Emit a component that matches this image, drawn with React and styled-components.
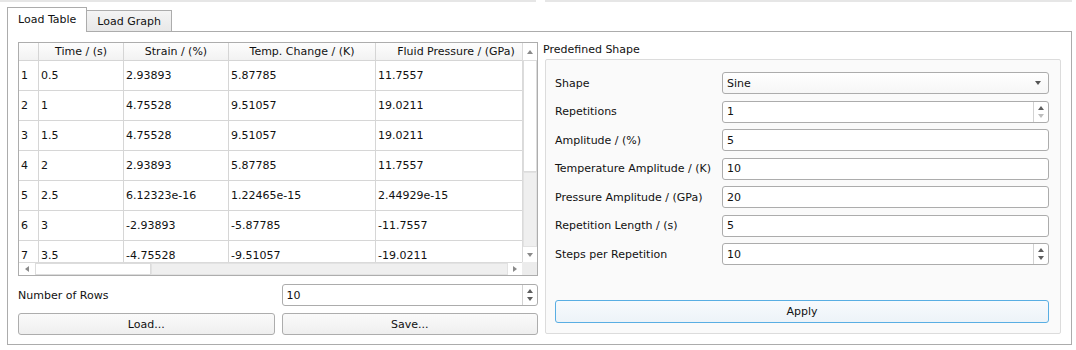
import styled, { createGlobalStyle, css } from 'styled-components';

const GlobalStyle = createGlobalStyle`
  html, body {
    margin: 0;
    padding: 0;
    background: #fff;
  }
  body {
    font-family: "DejaVu Sans", "Liberation Sans", sans-serif;
    font-size: 11px;
    color: #111;
  }
  * {
    box-sizing: border-box;
  }
`;

// last column is wider than the view, the horizontal scroll bar shows the rest
const COLS = '20px 85px 105px 147px 161px';

const Page = styled.div`
  width: 1076px;
  height: 350px;
  overflow: hidden;
  background: #fff;
`;

const TopStrip = styled.div`
  display: grid;
  grid-template-columns: 536px 1fr;
  gap: 9px;
  width: 1072px;
  height: 2px;
  span {
    background: #e6e6e6;
  }
`;

const TabWidget = styled.div`
  margin: 5px 0 0 7px;
  width: 1065px;
`;

const TabBar = styled.div`
  display: flex;
  align-items: flex-end;
  height: 24px;
`;

const Tab = styled.div`
  display: flex;
  align-items: center;
  border: 1px solid #acacac;
  border-bottom: none;
  white-space: nowrap;
  ${({ $active }) =>
    $active
      ? css`
          position: relative;
          z-index: 1;
          height: 25px;
          margin-bottom: -1px;
          padding: 0 10px 1px;
          background: #fff;
        `
      : css`
          height: 21px;
          padding: 0 10px;
          border-left: none;
          background: linear-gradient(#f4f4f4, #e8e8e8);
        `}
`;

const Pane = styled.div`
  display: flex;
  gap: 5px;
  padding: 10px 10px 9px;
  border: 1px solid #acacac;
`;

const LeftColumn = styled.div`
  width: 520px;
  display: flex;
  flex-direction: column;
`;

const TableFrame = styled.div`
  height: 234px;
  border: 1px solid #adadad;
  display: grid;
  grid-template-columns: 1fr 15px;
  grid-template-rows: 1fr 13px;
  background: #fff;
`;

const Viewport = styled.div`
  overflow: hidden;
  min-width: 0;
`;

const HeaderRow = styled.div`
  display: grid;
  grid-template-columns: ${COLS};
  height: 18px;
`;

const HeaderCell = styled.div`
  border-right: 1px solid #d5d5d5;
  border-bottom: 1px solid #d5d5d5;
  background: linear-gradient(#fdfdfd, #f2f2f2);
  text-align: center;
  line-height: 17px;
  white-space: nowrap;
  overflow: hidden;
`;

const Row = styled.div`
  display: grid;
  grid-template-columns: ${COLS};
  height: 30px;
`;

const Cell = styled.div`
  display: flex;
  align-items: center;
  padding-left: 2px;
  border-right: 1px solid #d6d6d6;
  border-bottom: 1px solid #d6d6d6;
  white-space: nowrap;
  overflow: hidden;
`;

const VScroll = styled.div`
  display: flex;
  flex-direction: column;
  border-left: 1px solid #dadada;
  background: #fff;
`;

const HScroll = styled.div`
  display: flex;
  border-top: 1px solid #dadada;
  background: #fff;
`;

const ScrollBtn = styled.div`
  display: flex;
  align-items: center;
  justify-content: center;
  flex: none;
  ${({ $size, $vertical }) =>
    $vertical ? `height: ${$size}px;` : `width: ${$size}px;`}
`;

const Thumb = styled.div`
  flex: none;
  background: #fff;
  border: 1px solid #dcdcdc;
  ${({ $size, $vertical }) =>
    $vertical ? `height: ${$size}px;` : `width: ${$size}px;`}
`;

const Track = styled.div`
  flex: 1;
  background: #efefef;
  border: 1px solid #e2e2e2;
`;

const Corner = styled.div`
  background: #ececec;
`;

const Arrow = styled.span`
  width: 0;
  height: 0;
  ${({ $dir, $s = 3, $c = '#8a8a8a' }) => {
    const t = `${$s}px solid transparent`;
    const f = `${$s + 1}px solid ${$c}`;
    if ($dir === 'up') return `border-left: ${t}; border-right: ${t}; border-bottom: ${f};`;
    if ($dir === 'down') return `border-left: ${t}; border-right: ${t}; border-top: ${f};`;
    if ($dir === 'left') return `border-top: ${t}; border-bottom: ${t}; border-right: ${f};`;
    return `border-top: ${t}; border-bottom: ${t}; border-left: ${f};`;
  }}
`;

const RowsLine = styled.div`
  display: grid;
  grid-template-columns: 1fr 1fr;
  gap: 7px;
  align-items: center;
  margin-top: ${({ $gap }) => $gap}px;
`;

const Field = styled.div`
  display: flex;
  align-items: center;
  height: 22px;
  border: 1px solid #acacac;
  border-radius: 3px;
  background: ${({ $combo }) => ($combo ? 'linear-gradient(#fff, #f6f6f6)' : '#fff')};
  overflow: hidden;
`;

const Value = styled.span`
  flex: 1;
  padding-left: 4px;
`;

const SpinButtons = styled.div`
  width: 15px;
  height: 100%;
  border-left: 1px solid #d2d2d2;
  display: flex;
  flex-direction: column;
  justify-content: center;
  align-items: center;
  gap: 4px;
`;

const ComboArrow = styled.div`
  width: 20px;
  display: flex;
  justify-content: center;
`;

const Button = styled.div`
  height: 22px;
  display: flex;
  align-items: center;
  justify-content: center;
  border: 1px solid ${({ $primary }) => ($primary ? '#59aee3' : '#adadad')};
  border-radius: 3px;
  background: ${({ $primary }) =>
    $primary ? 'linear-gradient(#f7fafd, #edf3f8)' : 'linear-gradient(#fafafa, #efefef)'};
  ${({ $primary }) => $primary && 'height: 23px; margin-top: auto;'}
`;

const RightColumn = styled.div`
  flex: 1;
  display: flex;
  flex-direction: column;
`;

const GroupTitle = styled.div`
  height: 17px;
  line-height: 15px;
`;

const GroupFrame = styled.div`
  flex: 1;
  margin: 0 0 1px 2px;
  padding: 12px 11px 10px 9px;
  border: 1px solid #dcdcdc;
  border-radius: 2px;
  background: #fafafa;
  display: flex;
  flex-direction: column;
`;

const Form = styled.div`
  display: grid;
  grid-template-columns: 167px 1fr;
  grid-auto-rows: 22px;
  row-gap: 6.5px;
  align-items: center;
`;

const Label = styled.span`
  white-space: nowrap;
`;

// only the rows that fit in the view; the last one is cut by the scroll area
const rows = [
  ['1', '0.5', '2.93893', '5.87785', '11.7557'],
  ['2', '1', '4.75528', '9.51057', '19.0211'],
  ['3', '1.5', '4.75528', '9.51057', '19.0211'],
  ['4', '2', '2.93893', '5.87785', '11.7557'],
  ['5', '2.5', '6.12323e-16', '1.22465e-15', '2.44929e-15'],
  ['6', '3', '-2.93893', '-5.87785', '-11.7557'],
  ['7', '3.5', '-4.75528', '-9.51057', '-19.0211'],
];

const headers = ['', 'Time / (s)', 'Strain / (%)', 'Temp. Change / (K)', 'Fluid Pressure / (GPa)'];

const SpinBox = ({ value, downDisabled }) => (
  <Field>
    <Value>{value}</Value>
    <SpinButtons>
      <Arrow $dir="up" $s={3.5} $c="#5e5e5e" />
      <Arrow $dir="down" $s={3.5} $c={downDisabled ? '#bdbdbd' : '#5e5e5e'} />
    </SpinButtons>
  </Field>
);

const LineEdit = ({ value }) => (
  <Field>
    <Value>{value}</Value>
  </Field>
);

const LoadTable = () => (
  <TableFrame>
    <Viewport>
      <HeaderRow>
        {headers.map((h, i) => (
          <HeaderCell key={i}>{h}</HeaderCell>
        ))}
      </HeaderRow>
      {rows.map((r) => (
        <Row key={r[0]}>
          {r.map((v, i) => (
            <Cell key={i}>{v}</Cell>
          ))}
        </Row>
      ))}
    </Viewport>
    <VScroll>
      <ScrollBtn $vertical $size={17}>
        <Arrow $dir="up" />
      </ScrollBtn>
      <Thumb $vertical $size={112} />
      <Track />
      <ScrollBtn $vertical $size={15}>
        <Arrow $dir="down" />
      </ScrollBtn>
    </VScroll>
    <HScroll>
      <ScrollBtn $size={16}>
        <Arrow $dir="left" />
      </ScrollBtn>
      <Thumb $size={116} />
      <Track />
      <ScrollBtn $size={14}>
        <Arrow $dir="right" />
      </ScrollBtn>
    </HScroll>
    <Corner />
  </TableFrame>
);

export default function App() {
  return (
    <Page>
      <GlobalStyle />
      <TopStrip>
        <span />
        <span />
      </TopStrip>
      <TabWidget>
        <TabBar>
          <Tab $active>Load Table</Tab>
          <Tab>Load Graph</Tab>
        </TabBar>
        <Pane>
          <LeftColumn>
            <LoadTable />
            <RowsLine $gap={8}>
              <Label>Number of Rows</Label>
              <SpinBox value="10" />
            </RowsLine>
            <RowsLine $gap={7}>
              <Button>Load...</Button>
              <Button>Save...</Button>
            </RowsLine>
          </LeftColumn>
          <RightColumn>
            <GroupTitle>Predefined Shape</GroupTitle>
            <GroupFrame>
              <Form>
                <Label>Shape</Label>
                <Field $combo>
                  <Value>Sine</Value>
                  <ComboArrow>
                    <Arrow $dir="down" $s={3.5} $c="#555" />
                  </ComboArrow>
                </Field>
                <Label>Repetitions</Label>
                <SpinBox value="1" downDisabled />
                <Label>Amplitude / (%)</Label>
                <LineEdit value="5" />
                <Label>Temperature Amplitude / (K)</Label>
                <LineEdit value="10" />
                <Label>Pressure Amplitude / (GPa)</Label>
                <LineEdit value="20" />
                <Label>Repetition Length / (s)</Label>
                <LineEdit value="5" />
                <Label>Steps per Repetition</Label>
                <SpinBox value="10" />
              </Form>
              <Button $primary>Apply</Button>
            </GroupFrame>
          </RightColumn>
        </Pane>
      </TabWidget>
    </Page>
  );
}
